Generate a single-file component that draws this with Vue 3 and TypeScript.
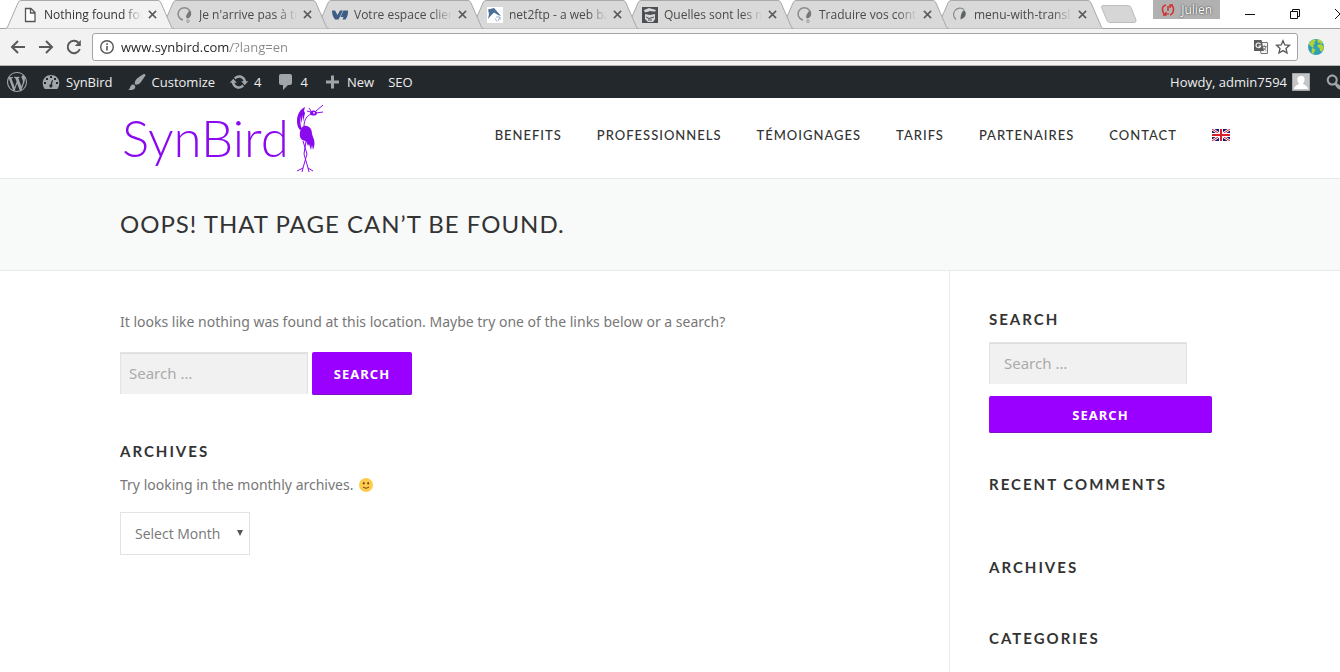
<script setup lang="ts">
import { ref } from 'vue'

type Favicon = 'page' | 'swirl' | 'ovh' | 'ftp' | 'cup' | 'crescent'
interface Tab {
  title: string
  icon: Favicon
}
interface AdminItem {
  label: string
  path: string
  holes?: string
}

const tabs: Tab[] = [
  { title: 'Nothing found for', icon: 'page' },
  { title: "Je n'arrive pas à tr", icon: 'swirl' },
  { title: 'Votre espace clien', icon: 'ovh' },
  { title: 'net2ftp - a web ba', icon: 'ftp' },
  { title: 'Quelles sont les m', icon: 'cup' },
  { title: 'Traduire vos conte', icon: 'swirl' },
  { title: 'menu-with-transl', icon: 'crescent' },
]

const adminItems: AdminItem[] = [
  {
    label: 'SynBird',
    path: 'M3.76 17h12.48c1.34-1.63 2.01-3.82 2.01-6C18.25 6.3 14.61 3 10 3S1.75 6.3 1.75 11c0 2.18.67 4.37 2.01 6z',
    holes: 'M9 4h2v2H9zM5 6h2v2H5zM13 6h2v2h-2zM3 10h2v2H3zM15 10h2v2h-2zM11 8l1 .4-1.1 4.2a1.6 1.6 0 1 1-1.3-.3z',
  },
  {
    label: 'Customize',
    path: 'M18.33 3.57s.27-.8-.31-1.36c-.53-.52-1.22-.24-1.22-.24-.61.3-5.76 3.47-7.67 5.57-.86.96-2.06 3.79-1.09 4.82.92.98 3.96-.17 4.79-1 2.06-2.06 5.21-7.17 5.5-7.79zM1.4 17.65c2.37-1.56 1.46-3.41 3.23-4.64.93-.65 2.22-.62 3.08.29.63.67.8 2.57-.16 3.46-1.57 1.45-4 1.55-6.15.89z',
  },
  {
    label: '4',
    path: 'M10.2 3.28c3.53 0 6.43 2.61 6.92 6h2.08l-3.5 4-3.5-4h2.32c-.45-1.97-2.21-3.45-4.32-3.45-1.45 0-2.73.71-3.54 1.78L4.95 5.66C6.23 4.2 8.11 3.28 10.2 3.28zm-.4 13.44c-3.52 0-6.43-2.61-6.92-6H.8l3.5-4c1.17 1.33 2.33 2.67 3.5 4H5.48c.45 1.97 2.21 3.45 4.32 3.45 1.45 0 2.73-.71 3.54-1.78l1.71 1.95c-1.28 1.46-3.15 2.38-5.25 2.38z',
  },
  {
    label: '4',
    path: 'M5 2h9c1.1 0 2 .9 2 2v7c0 1.1-.9 2-2 2h-2l-5 5v-5H5c-1.1 0-2-.9-2-2V4c0-1.1.9-2 2-2z',
  },
  { label: 'New', path: 'M17 8.500v3h-5v5H9v-5H4v-3h5v-5h3v5h5z' },
]

const navItems: string[] = ['Benefits', 'Professionnels', 'Témoignages', 'Tarifs', 'Partenaires', 'Contact']
const address = ref<string>('www.synbird.com/?lang=en')
const query = ref<string>('')
const sideQuery = ref<string>('')
const month = ref<string>('')
</script>

<template>
  <div class="window">
    <div class="tabstrip">
      <div
        v-for="(tab, i) in tabs"
        :key="tab.title"
        class="tab"
        :class="{ active: i === 0 }"
        :style="{ zIndex: tabs.length - i }"
      >
        <svg class="tab-shape" viewBox="0 0 169 29" preserveAspectRatio="none" aria-hidden="true">
          <path d="M0 28.500C2 28.500 2.500 27.500 3 26L13 3Q14 .5 16 .5H153Q155 .5 156 3L166 26C166.500 27.500 167 28.500 169 28.500V29H0z" />
        </svg>
        <button class="tab-main" type="button">
          <svg class="favicon" viewBox="0 0 16 16" aria-hidden="true">
            <path v-if="tab.icon === 'page'" d="M3.500 1.500h5.500l4 4v9h-9.500zM8.500 1.500v4.500h4.500" fill="#fff" stroke="#555" stroke-width="1.300" />
            <g v-else-if="tab.icon === 'swirl'">
              <path d="M6 13A6.200 6.200 0 1 1 12.500 3.500" fill="none" stroke="#8a8a8a" stroke-width="1.500" />
              <path d="M13 3c2.500 3.500 1 8-3 8.500-1.500-1.500-1-3 0-4.500S12 4 13 3z" fill="#777" />
              <circle cx="11" cy="14.200" r="1.300" fill="none" stroke="#999" />
            </g>
            <g v-else-if="tab.icon === 'crescent'">
              <path d="M4 12.500A6.200 6.200 0 1 1 12 2.500" fill="none" stroke="#8a8a8a" stroke-width="1.200" />
              <path d="M12 3c3 3 2.500 7-3.500 9.500C8.500 9 9 5.500 12 3z" fill="#5f6468" />
            </g>
            <path v-else-if="tab.icon === 'ovh'" d="M0 3.500h3l2.500 4.500L8 3.500h3L6.500 12.500H3C1 10 0 7 0 3.500zm11.500 0H16c.3 3.500-.8 7-2.500 9h-3l1-2.500H8.500z" fill="#3d5d86" />
            <g v-else-if="tab.icon === 'ftp'">
              <path d="M0 0h16v16H0z" fill="#fff" />
              <path d="M1 2.500L7 1l7 8-3-1-4-2.500L3.500 9 1 12l1-5z" fill="#4d6f98" />
              <path d="M8 11.500l2 3M9 10h4v3M11 14l2-4" stroke="#9fb3ca" fill="none" />
            </g>
            <g v-else>
              <path d="M0 0h16v16H0z" fill="#4b4e52" />
              <path d="M2 3l5-2 7 2-1 2-5-1-5 2zM3 7l5 1 5-1v5l-2 3H6l-3-3z" fill="#d5d7d9" />
              <path d="M4 10l3 1.500 5-1.500M6 13h4M1 6l13-1" stroke="#4b4e52" fill="none" />
            </g>
          </svg>
          <span class="tab-title">{{ tab.title }}</span>
        </button>
        <button class="tab-close" type="button" :aria-label="`Close ${tab.title}`">
          <svg viewBox="0 0 10 10" aria-hidden="true"><path d="M1 1l8 8M9 1l-8 8" stroke="currentColor" stroke-width="1.700" /></svg>
        </button>
      </div>
      <button class="new-tab" type="button" aria-label="New tab">
        <svg viewBox="0 0 36 18" aria-hidden="true">
          <path d="M2 .5H27Q29 .5 30 2.500L35 15Q35.500 17.500 33 17.500H9Q7 17.500 6 15.500L.5 2.500Q.5 .5 2 .5z" fill="#d6d6d6" stroke="#bcbcbc" />
        </svg>
      </button>
      <div class="window-tools">
        <button class="profile" type="button">
          <svg viewBox="0 0 14 12" aria-hidden="true">
            <path d="M5 1Q1 2 1.500 6T5 11M2 11h3V8M9 1Q13 2 12.500 6T9 11M12 1H9v3M7 2v5M7 9v1.500" fill="none" stroke="#d2322d" stroke-width="1.500" />
          </svg>
          <span>Julien</span>
        </button>
        <button class="control" type="button" aria-label="Minimize">
          <svg viewBox="0 0 12 12" aria-hidden="true"><path d="M1 6.500h10" /></svg>
        </button>
        <button class="control" type="button" aria-label="Restore">
          <svg viewBox="0 0 12 12" aria-hidden="true"><path d="M1.500 3.500h7v7h-7zM3.500 3.500v-2h7v7h-2" /></svg>
        </button>
        <button class="control" type="button" aria-label="Close window">
          <svg viewBox="0 0 12 12" aria-hidden="true"><path d="M1 1l10 10M11 1L1 11" /></svg>
        </button>
      </div>
    </div>

    <div class="toolbar">
      <button class="tool" type="button" aria-label="Back">
        <svg viewBox="0 0 16 16" aria-hidden="true"><path d="M15 8H2M8 2L2 8l6 6" /></svg>
      </button>
      <button class="tool" type="button" aria-label="Forward">
        <svg viewBox="0 0 16 16" aria-hidden="true"><path d="M1 8h13M8 2l6 6-6 6" /></svg>
      </button>
      <button class="tool" type="button" aria-label="Reload">
        <svg viewBox="0 0 16 16" aria-hidden="true">
          <path d="M13.800 10A6.200 6.200 0 1 1 12.500 3.700" />
          <path class="solid" d="M14.800 1v6h-6z" />
        </svg>
      </button>
      <div class="omnibox">
        <svg class="info" viewBox="0 0 16 16" aria-hidden="true">
          <circle cx="8" cy="8" r="6.300" fill="none" stroke="#555" stroke-width="1.400" />
          <path d="M8 7v4.500M8 4.300v1.700" stroke="#555" stroke-width="1.600" />
        </svg>
        <input v-model="address" class="address" type="text" aria-label="Address" />
        <button class="omni-button" type="button" aria-label="Translate this page">
          <svg viewBox="0 0 16 16" aria-hidden="true">
            <path d="M6 3.500h8.500v11H8z" fill="#f4f4f4" stroke="#777" />
            <path d="M1 1h7.500l2.500 11H1z" fill="#5c5c5c" />
            <path d="M7.500 5.200A2.400 2.400 0 1 0 7.700 7H5.500" fill="none" stroke="#fff" stroke-width="1.100" />
            <path d="M9.500 7.500h4M11.500 6.500v1M13 7.500c-.5 2-1.500 3-2.500 3.800M10.500 9c.8 1.200 1.700 2 2.800 2.500" fill="none" stroke="#777" />
          </svg>
        </button>
        <button class="omni-button" type="button" aria-label="Bookmark this page">
          <svg viewBox="0 0 16 16" aria-hidden="true">
            <path d="M8 1.700l1.800 4.200 4.700.4-3.500 3.100 1 4.600L8 11.600 4 14l1-4.600L1.500 6.300l4.700-.4z" fill="none" stroke="#555" stroke-width="1.300" />
          </svg>
        </button>
      </div>
      <button class="extension" type="button" aria-label="Globe extension">
        <svg viewBox="0 0 16 16" aria-hidden="true">
          <circle cx="8" cy="8" r="8" fill="#2f9fb4" />
          <path d="M.8 5Q2.500 1.500 6.500.2L8 2l-2 1 1 2-2 1 1 2-1.500.5-2-1.500zM9 .1q4 .4 6 4l-2 1-1-1.500-2 .5zM9.500 6l3-1 3 2q.6 3-1.500 5.500l-2-.5-.5-3-2-1zM4 9l3.500 1.500L6 13.500l-1 1.500-1.500-1z" fill="#b5d334" />
        </svg>
      </button>
    </div>

    <div class="adminbar">
      <a class="admin-item" href="#" aria-label="About WordPress">
        <svg viewBox="0 0 20 20" aria-hidden="true">
          <path d="M20 10c0-5.510-4.490-10-10-10C4.480 0 0 4.490 0 10c0 5.520 4.480 10 10 10 5.510 0 10-4.480 10-10zM7.780 15.370L4.370 6.220c.55-.02 1.170-.08 1.170-.08.5-.06.44-1.130-.06-1.110 0 0-1.450.11-2.370.11-.18 0-.37 0-.58-.01C4.120 2.690 6.870 1.110 10 1.110c2.330 0 4.450.87 6.050 2.340-.68-.11-1.650.39-1.650 1.580 0 .74.45 1.360.9 2.100.35.61.55 1.360.55 2.460 0 1.490-1.400 5-1.400 5l-3.030-8.370c.54-.02.82-.17.82-.17.5-.05.44-1.250-.06-1.220 0 0-1.440.12-2.380.12-.87 0-2.330-.12-2.330-.12-.5-.03-.56 1.200-.06 1.220l.92.08 1.260 3.410zM17.410 10c.24-.64.74-1.870.43-4.250.7 1.290 1.050 2.710 1.050 4.250 0 3.290-1.730 6.240-4.400 7.780.97-2.590 1.940-5.200 2.920-7.780zM6.100 18.090C3.120 16.650 1.110 13.530 1.110 10c0-1.300.23-2.480.72-3.590C3.250 10.300 4.670 14.200 6.100 18.090zm4.030-6.630l2.580 6.980c-.86.29-1.760.45-2.710.45-.79 0-1.570-.11-2.290-.33.81-2.380 1.620-4.740 2.420-7.100z" />
        </svg>
      </a>
      <a v-for="(item, i) in adminItems" :key="i" class="admin-item" href="#">
        <svg viewBox="0 0 20 20" aria-hidden="true">
          <path :d="item.path" />
          <path v-if="item.holes" class="hole" :d="item.holes" />
        </svg>
        <span>{{ item.label }}</span>
      </a>
      <a class="admin-item" href="#">SEO</a>
      <div class="admin-right">
        <a class="admin-item" href="#">
          <span>Howdy, admin7594</span>
          <svg class="avatar" viewBox="0 0 18 18" aria-hidden="true">
            <path class="avatar-back" d="M0 0h18v18H0z" />
            <path class="avatar-body" d="M9 3c3 0 4 2 3.500 4.500-.3 1.500-.8 2.300-1.500 3 .2 1.500 4.500 1.500 5 5.500H2c.5-4 4.800-4 5-5.500-.7-.7-1.200-1.500-1.500-3C5 5 6 3 9 3z" />
          </svg>
        </a>
        <a class="admin-item" href="#" aria-label="Search">
          <svg viewBox="0 0 20 20" aria-hidden="true">
            <path d="M12.140 4.180c1.870 1.870 2.110 4.750.72 6.890.12.100.22.210.36.310.2.160.47.360.81.590.34.240.56.390.66.470.42.310.73.570.94.780.32.320.6.650.84 1 .25.350.44.690.59 1.040.14.350.21.680.18 1-.02.320-.14.590-.36.810s-.49.340-.81.360c-.31.020-.65-.04-.99-.19-.35-.14-.7-.34-1.040-.59-.35-.24-.68-.52-1-.84-.21-.21-.47-.52-.77-.93-.1-.13-.25-.35-.47-.66-.22-.32-.4-.57-.56-.78-.16-.2-.29-.35-.44-.5-2.070 1.090-4.690.76-6.440-.98-2.140-2.150-2.140-5.640 0-7.780 2.150-2.150 5.630-2.150 7.780 0zm-1.410 6.360c1.360-1.370 1.360-3.580 0-4.950-1.370-1.370-3.590-1.370-4.950 0-1.370 1.370-1.370 3.580 0 4.950 1.360 1.370 3.580 1.370 4.950 0z" />
          </svg>
        </a>
      </div>
    </div>

    <header class="site-header">
      <a class="logo" href="#">
        <span>SynBird</span>
        <svg viewBox="0 0 30 70" aria-hidden="true">
          <path d="M11 4C6 6 3 12 3 18c0 4 1 7 3 9l2-1C6 22 6 18 7 13l0 8 2-9 0 7 2-9-1-2z" />
          <path d="M10 23c5-1 8 3 8 8l1 3c2 4 2 8 0 13l-1-5-1 5-2-6-1 2-2-5C7 38 5 34 6 29c.5-3 2-5.500 4-6z" />
          <ellipse cx="19.500" cy="10" rx="3.400" ry="2.600" />
          <circle class="eye" cx="20" cy="9.800" r=".9" />
          <path class="line" d="M10 24C10 16 13 13 17 11M22 8l7-6M22 10l7-1M17 9l-4-1M17 8l-2-3M9 38l4 13-4 14-6 3M12 38l-2 13 4 14 5 3M9 65l-1 4M14 65l1 4" />
        </svg>
      </a>
      <nav class="site-nav" aria-label="Primary">
        <a v-for="item in navItems" :key="item" href="#">{{ item }}</a>
        <a class="flag" href="#" aria-label="English">
          <svg viewBox="0 0 18 12" aria-hidden="true">
            <path d="M0 0h18v12H0z" fill="#1a1a72" />
            <path d="M0 0l18 12M18 0L0 12" stroke="#fff" stroke-width="2.600" />
            <path d="M0 0l18 12M18 0L0 12" stroke="#d8202c" stroke-width="1" />
            <path d="M9 0v12M0 6h18" stroke="#fff" stroke-width="4" />
            <path d="M9 0v12M0 6h18" stroke="#d8202c" stroke-width="2" />
          </svg>
        </a>
      </nav>
    </header>

    <div class="title-band">
      <h1>Oops! That page can’t be found.</h1>
    </div>

    <div class="layout">
      <main>
        <p>It looks like nothing was found at this location. Maybe try one of the links below or a search?</p>
        <form class="search-form" @submit.prevent>
          <input v-model="query" type="search" placeholder="Search …" aria-label="Search for" />
          <button type="submit">Search</button>
        </form>
        <h2>Archives</h2>
        <p class="archive-note">
          Try looking in the monthly archives.
          <svg class="smiley" viewBox="0 0 14 14" role="img" aria-label="Smiling face">
            <circle cx="7" cy="7" r="7" fill="#ffcb4c" />
            <ellipse cx="4.800" cy="5.200" rx=".9" ry="1.300" fill="#65471b" />
            <ellipse cx="9.200" cy="5.200" rx=".9" ry="1.300" fill="#65471b" />
            <path d="M4 9.200q3 2.200 6 0" fill="none" stroke="#65471b" stroke-width="1" />
          </svg>
        </p>
        <div class="month">
          <select v-model="month" aria-label="Archives">
            <option value="">Select Month</option>
          </select>
          <svg viewBox="0 0 6 6" aria-hidden="true"><path d="M0 0h6L3 6z" /></svg>
        </div>
      </main>
      <aside>
        <section>
          <h2>Search</h2>
          <form class="side-form" @submit.prevent>
            <input v-model="sideQuery" type="search" placeholder="Search …" aria-label="Search the site" />
            <button type="submit">Search</button>
          </form>
        </section>
        <section class="comments"><h2>Recent Comments</h2></section>
        <section class="side-archives"><h2>Archives</h2></section>
        <section><h2>Categories</h2></section>
      </aside>
    </div>
  </div>
</template>

<style>
html,
body {
  margin: 0;
  background: #fff;
}
#app {
  min-height: 100vh;
  display: flex;
}
</style>

<style scoped>
.window {
  flex: 1;
  min-width: 0;
  min-height: 100vh;
  display: flex;
  flex-direction: column;
  overflow: hidden;
  background: #fff;
  color: #777;
  font-family: "Noto Sans", sans-serif;
  font-size: 14px;
  line-height: 24px;
}
*,
*::before {
  box-sizing: border-box;
}
button {
  padding: 0;
  border: 0;
  background: none;
  color: inherit;
  font: inherit;
  cursor: pointer;
}
a {
  color: inherit;
  text-decoration: none;
}
svg {
  display: block;
  flex: none;
}
h1,
h2,
p {
  margin: 0;
}

.tabstrip {
  height: 29px;
  display: flex;
  padding-left: 5px;
  border-bottom: 1px solid #a3a3a3;
}
.tab {
  position: relative;
  flex: 0 0 169px;
  min-width: 0;
  height: 29px;
  margin-right: -14px;
  padding: 0 12px 0 17px;
  display: flex;
  align-items: center;
  color: #4a4a4a;
  font: 12px/16px "Open Sans", sans-serif;
}
.tab-shape {
  position: absolute;
  inset: 0;
  width: 100%;
  height: 100%;
  fill: #d9d9d9;
  stroke: #a9a9a9;
}
.active .tab-shape {
  fill: #f2f2f2;
}
.active {
  color: #333;
}
.tab-main {
  position: relative;
  flex: 1;
  min-width: 0;
  display: flex;
  align-items: center;
  gap: 6px;
}
.favicon {
  width: 16px;
  height: 16px;
}
.tab-title {
  flex: 1;
  overflow: hidden;
  white-space: nowrap;
  text-align: left;
  mask-image: linear-gradient(to right, #000 80%, transparent 100%);
}
.tab-close {
  position: relative;
  width: 20px;
  height: 16px;
  display: grid;
  place-items: center;
  color: #5a5a5a;
}
.tab-close svg {
  width: 9px;
  height: 9px;
}
.new-tab {
  align-self: center;
  margin-left: 11px;
}
.new-tab svg {
  width: 36px;
  height: 18px;
}
.window-tools {
  margin-left: auto;
  margin-right: -22px;
  display: flex;
}
.profile {
  height: 19px;
  padding: 0 8px;
  margin-right: 7px;
  display: flex;
  align-items: center;
  gap: 6px;
  background: #b1b1b1;
  color: #fff;
  font: 12px/18px "Open Sans", sans-serif;
  text-shadow: 0 0 2px #444, 0 0 1px #444;
}
.profile svg {
  width: 14px;
  height: 12px;
}
.control {
  width: 45px;
  height: 27px;
  display: grid;
  place-items: center;
}
.control svg {
  width: 12px;
  height: 12px;
  fill: none;
  stroke: #111;
}

.toolbar {
  height: 37px;
  padding: 0 16px 0 10px;
  display: flex;
  align-items: center;
  gap: 12px;
  background: #f2f2f2;
  border-bottom: 1px solid #b5b5b5;
}
.tool svg {
  width: 16px;
  height: 16px;
  fill: none;
  stroke: #5a5a5a;
  stroke-width: 2;
}
.tool .solid {
  fill: #5a5a5a;
  stroke: none;
}
.omnibox {
  flex: 1;
  height: 28px;
  margin: 0 -2px;
  padding: 0 6px;
  display: flex;
  align-items: center;
  gap: 6px;
  background: #fff;
  border: 1px solid #a5a5a5;
  border-radius: 3px;
}
.info {
  width: 16px;
  height: 16px;
}
.address {
  flex: 1;
  min-width: 0;
  height: 24px;
  padding: 0;
  border: 0;
  outline: 0;
  font: 13px/24px "Open Sans", sans-serif;
  color: transparent;
  background: linear-gradient(to right, #222 109px, #888 109px);
  background-clip: text;
  -webkit-background-clip: text;
}
.omni-button svg,
.extension svg {
  width: 16px;
  height: 16px;
}

.adminbar {
  height: 32px;
  display: flex;
  background: #23282d;
  color: #eee;
  font: 13px/32px "Open Sans", sans-serif;
}
.admin-item {
  padding: 0 7px;
  display: flex;
  align-items: center;
  gap: 5px;
  white-space: nowrap;
}
.admin-item svg {
  width: 20px;
  height: 20px;
  fill: #a0a5aa;
}
.admin-item .hole {
  fill: #23282d;
}
.admin-right {
  margin-left: auto;
  margin-right: -11px;
  display: flex;
}
.admin-item .avatar {
  width: 18px;
  height: 18px;
}
.admin-item .avatar-back {
  fill: #c5c5c5;
  stroke: #82878c;
}
.admin-item .avatar-body {
  fill: #fff;
}

.site-header {
  height: 81px;
  padding: 0 110px 0 122px;
  display: flex;
  align-items: center;
  justify-content: space-between;
  border-bottom: 1px solid #e9e9e9;
}
.logo {
  display: flex;
  align-items: flex-start;
  gap: 5px;
  color: #8a0af0;
  font: 300 51px/70px Lato, sans-serif;
}
.logo svg {
  width: 30px;
  height: 70px;
  fill: currentColor;
}
.logo .eye {
  fill: #fff;
}
.logo .line {
  fill: none;
  stroke: currentColor;
  stroke-width: 1;
}
.site-nav {
  margin-bottom: 6px;
  display: flex;
  align-items: center;
  gap: 35px;
  color: #333;
  font: 500 13px/24px Lato, sans-serif;
  letter-spacing: 1px;
  text-transform: uppercase;
}
.flag svg {
  width: 18px;
  height: 12px;
}

.title-band {
  padding: 29px 120px 30px;
  background: #f8f9f9;
  border-bottom: 1px solid #e9e9e9;
}
h1 {
  color: #333;
  font: 400 24px/32px Lato, sans-serif;
  letter-spacing: 1px;
  text-transform: uppercase;
}
h2 {
  color: #333;
  font: 700 15px/24px Lato, sans-serif;
  letter-spacing: 2px;
  text-transform: uppercase;
}

.layout {
  flex: 1;
  display: flex;
}
main {
  flex: 1;
  padding: 39px 40px 0 120px;
}
aside {
  flex: 0 0 391px;
  padding: 36px 128px 0 39px;
  border-left: 1px solid #e9e9e9;
}
form input {
  height: 42px;
  padding: 0 8px 2px;
  border: 1px solid #e3e3e3;
  border-bottom: 0;
  border-radius: 0;
  outline: 0;
  background: #f1f1f1;
  box-shadow: inset 0 1px 1px #dcdcdc;
  color: #777;
  font: 15px/24px "Noto Sans", sans-serif;
}
form input::placeholder {
  color: #aaa;
  opacity: 1;
}
form button {
  border-radius: 2px;
  background: #90f;
  box-shadow: inset 0 -1px 0 #7a12c4;
  color: #fff;
  font: 700 13px/24px "Noto Sans", sans-serif;
  letter-spacing: 1px;
  text-transform: uppercase;
}
.search-form {
  margin: 18px 0 44px;
  display: flex;
  gap: 4px;
}
.search-form input {
  width: 188px;
}
.search-form button {
  width: 100px;
  height: 43px;
}
.archive-note {
  margin: 10px 0 15px;
  display: flex;
  align-items: center;
  gap: 6px;
}
.smiley {
  width: 14px;
  height: 14px;
}
.month {
  position: relative;
  width: 130px;
}
.month select {
  width: 100%;
  height: 43px;
  padding: 0 24px 0 14px;
  appearance: none;
  border: 1px solid #e3e3e3;
  border-radius: 0;
  background: #fff;
  color: #777;
  font: 14px/24px "Open Sans", sans-serif;
}
.month svg {
  position: absolute;
  right: 7px;
  top: 18px;
  width: 6px;
  height: 6px;
  fill: #555;
  pointer-events: none;
}
.side-form {
  margin: 11px 0 39px;
  display: flex;
  flex-direction: column;
  align-items: flex-start;
  gap: 12px;
}
.side-form input {
  width: 198px;
  padding: 0 14px 2px;
}
.side-form button {
  width: 100%;
  height: 37px;
}
.comments {
  margin-bottom: 59px;
}
.side-archives {
  margin-bottom: 47px;
}
</style>
